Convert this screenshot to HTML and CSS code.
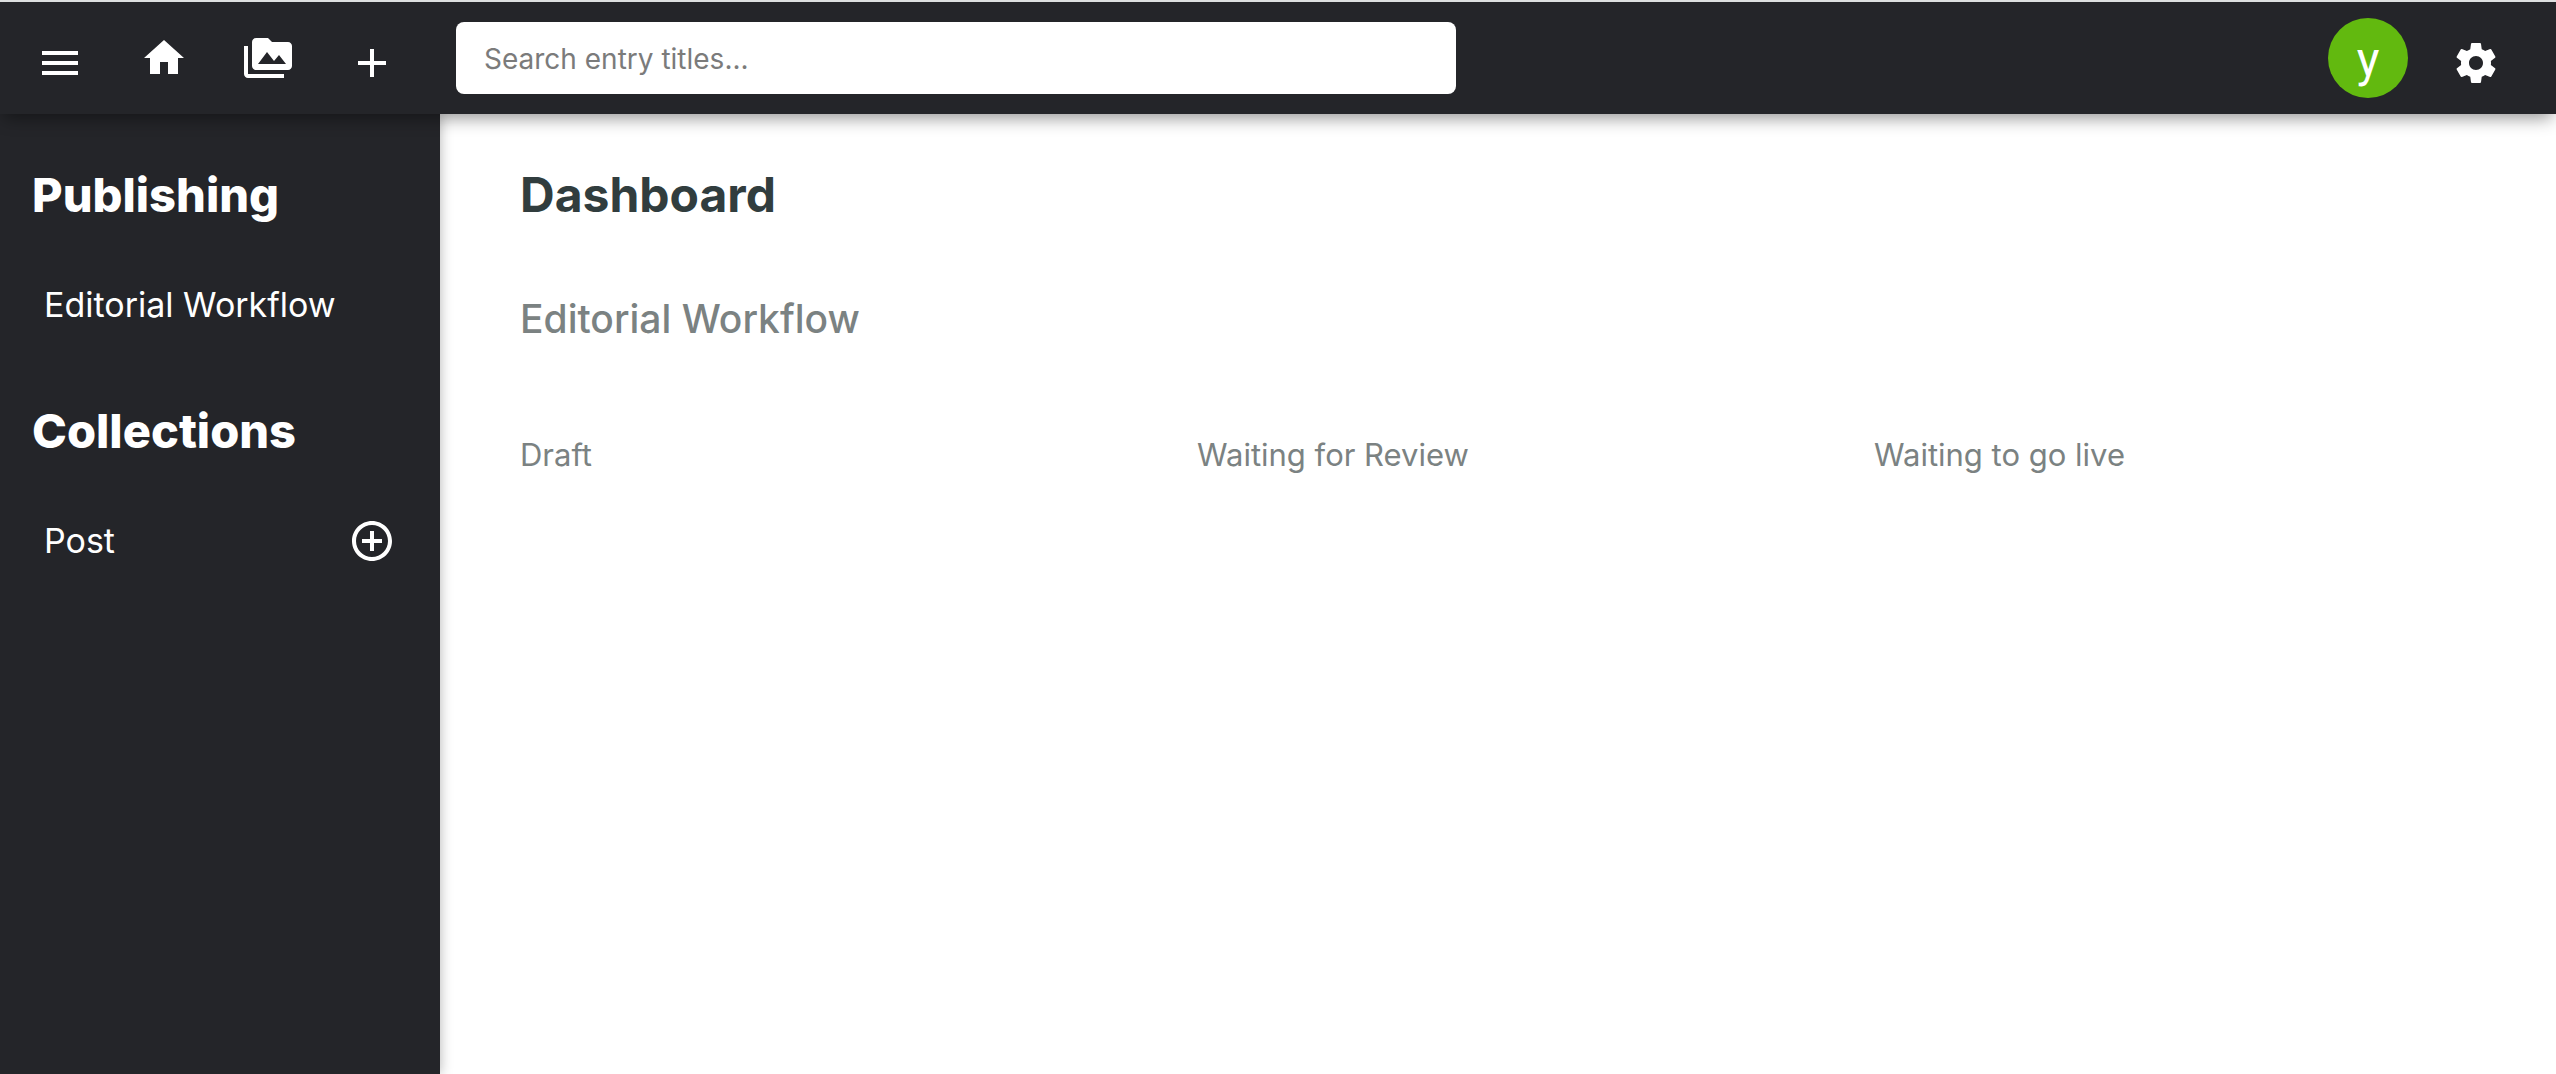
FILE: index.html
```html
<!DOCTYPE html>
<html lang="en">
<head>
<meta charset="utf-8">
<title>Dashboard</title>
<link rel="stylesheet" href="styles.css">
</head>
<body>
<header class="appbar">
  <nav class="appbar-nav">
    <button class="icon-button" type="button" aria-label="Toggle menu"><svg class="icon" viewBox="0 0 24 24"><path d="M3 18h18v-2H3v2zm0-5h18v-2H3v2zm0-7v2h18V6H3z"/></svg></button>
    <a class="icon-link" href="#" aria-label="Home"><svg class="icon" viewBox="0 0 24 24"><path d="M10 20v-6h4v6h5v-8h3L12 3 2 12h3v8z"/></svg></a>
    <a class="icon-link" href="#media" aria-label="Media"><svg class="icon" viewBox="0 0 24 24"><path d="M2 6H0v5h.01L0 20c0 1.1.9 2 2 2h18v-2H2V6zm20-2h-8l-2-2H6c-1.1 0-1.99.9-1.99 2L4 16c0 1.1.9 2 2 2h16c1.1 0 2-.9 2-2V6c0-1.1-.9-2-2-2zM7 15l4.5-6 3.5 4.51 2.5-3.01L21 15H7z"/></svg></a>
    <button class="icon-button" type="button" aria-label="New entry"><svg class="icon" viewBox="0 0 24 24"><path d="M19 13h-6v6h-2v-6H5v-2h6V5h2v6h6v2z"/></svg></button>
  </nav>
  <input class="search" type="search" aria-label="Search entry titles" placeholder="Search entry titles...">
  <div class="appbar-user">
    <span class="avatar">y</span>
    <button class="icon-button" type="button" aria-label="Settings"><svg class="icon" viewBox="0 0 24 24"><path d="M19.43 12.98c.04-.32.07-.64.07-.98s-.03-.66-.07-.98l2.11-1.65c.19-.15.24-.42.12-.64l-2-3.46c-.12-.22-.39-.3-.61-.22l-2.49 1c-.52-.4-1.08-.73-1.69-.98l-.38-2.65C14.46 2.18 14.25 2 14 2h-4c-.25 0-.46.18-.49.42l-.38 2.65c-.61.25-1.17.59-1.69.98l-2.49-1c-.23-.09-.49 0-.61.22l-2 3.46c-.13.22-.07.49.12.64l2.11 1.65c-.04.32-.07.65-.07.98s.03.66.07.98l-2.11 1.65c-.19.15-.24.42-.12.64l2 3.46c.12.22.39.3.61.22l2.49-1c.52.4 1.08.73 1.69.98l.38 2.65c.03.24.24.42.49.42h4c.25 0 .46-.18.49-.42l.38-2.65c.61-.25 1.17-.59 1.69-.98l2.49 1c.23.09.49 0 .61-.22l2-3.46c.12-.22.07-.49-.12-.64l-2.11-1.65zM12 15.5c-1.93 0-3.5-1.57-3.5-3.5s1.57-3.5 3.5-3.5 3.5 1.57 3.5 3.5-1.57 3.5-3.5 3.5z"/></svg></button>
  </div>
</header>
<div class="layout">
  <aside class="sidebar">
    <section class="group">
      <h2 class="group-title">Publishing</h2>
      <div class="group-row"><a class="group-link" href="#workflow">Editorial Workflow</a></div>
    </section>
    <section class="group">
      <h2 class="group-title">Collections</h2>
      <div class="group-row">
        <a class="group-link" href="#post">Post</a>
        <a class="group-add" href="#post-new" aria-label="New Post"><svg class="icon" viewBox="0 0 24 24"><path d="M13 7h-2v4H7v2h4v4h2v-4h4v-2h-4V7zm-1-5C6.48 2 2 6.48 2 12s4.480 10 10 10 10-4.480 10-10S17.520 2 12 2zm0 18c-4.410 0-8-3.590-8-8s3.590-8 8-8 8 3.590 8 8-3.590 8-8 8z"/></svg></a>
      </div>
    </section>
  </aside>
  <main class="content">
    <h1 class="page-title">Dashboard</h1>
    <h2 class="section-title">Editorial Workflow</h2>
    <div class="board">
      <h3 class="board-title">Draft</h3>
      <h3 class="board-title">Waiting for Review</h3>
      <h3 class="board-title">Waiting to go live</h3>
    </div>
  </main>
</div>
</body>
</html>
```

FILE: styles.css
```css
* {
  box-sizing: border-box;
}

body {
  display: flex;
  flex-direction: column;
  min-height: 100vh;
  margin: 0;
  border-top: 2px solid #dddfe0;
  background: #fff;
  color: #7b8282;
  font-family: Inter, "Liberation Sans", sans-serif;
}

h1, h2, h3 {
  margin: 0;
}

a {
  color: inherit;
  text-decoration: none;
}

/* Top bar */
.appbar {
  position: relative;
  z-index: 1;
  display: flex;
  align-items: center;
  padding: 16px 56px 16px 36px;
  background: #242529;
  color: #fff;
  box-shadow: 0 8px 16px -4px rgba(0, 0, 0, 0.42);
}

.appbar-nav {
  display: flex;
  align-items: center;
  gap: 56px;
  margin-right: 60px;
}

.icon {
  display: block;
  width: 48px;
  height: 48px;
  fill: currentColor;
}

.icon-button {
  padding: 10px 0 0;
  border: 0;
  background: none;
  color: inherit;
}

.search {
  flex: 0 1 1000px;
  min-width: 0;
  height: 72px;
  padding: 2px 28px 0;
  border: 0;
  border-radius: 8px;
  background: #fff;
  font: 400 28px/36px Inter, "Liberation Sans", sans-serif;
}

.search::placeholder {
  color: #7b7b7b;
}

.appbar-user {
  display: flex;
  align-items: center;
  gap: 44px;
  margin-left: auto;
}

.avatar {
  width: 80px;
  height: 80px;
  padding-top: 4px;
  border-radius: 50%;
  background: #62b90f;
  font: 400 48px/76px Roboto, "Liberation Sans", sans-serif;
  text-align: center;
}

/* Page body */
.layout {
  display: flex;
  flex: 1;
}

.sidebar {
  flex: 0 0 440px;
  padding: 51px 44px 0 32px;
  background: #242529;
  color: #fff;
  box-shadow: 0 0 12px rgba(0, 0, 0, 0.3);
}

.group {
  margin-bottom: 72px;
}

.group-title {
  margin-bottom: 56px;
  font-size: 47px;
  font-weight: 800;
  line-height: 60px;
}

.group-row {
  display: flex;
  align-items: center;
  justify-content: space-between;
  padding-left: 12px;
}

.group-link {
  font-size: 34px;
  line-height: 48px;
}

.content {
  flex: 1;
  padding: 51px 80px;
}

.page-title {
  color: #313d3e;
  font-size: 48px;
  font-weight: 700;
  line-height: 60px;
}

.section-title {
  margin-top: 70px;
  font-size: 39px;
  font-weight: 500;
  line-height: 48px;
}

.board {
  display: grid;
  grid-template-columns: repeat(3, 1fr);
  gap: 75px;
  margin-top: 92px;
}

.board-title {
  font-size: 31px;
  font-weight: 400;
  line-height: 40px;
}
```
